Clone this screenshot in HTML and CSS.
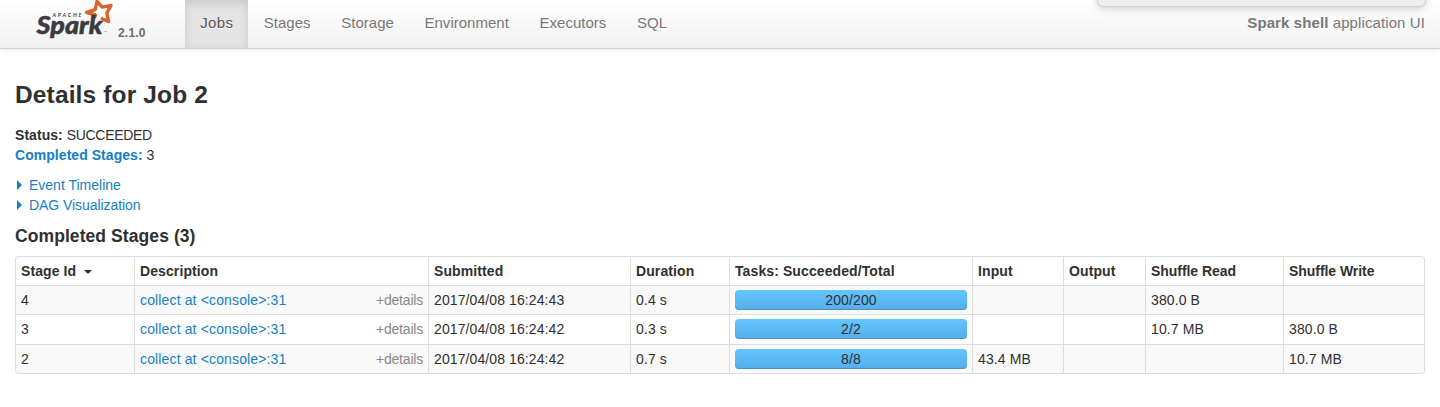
FILE: index.html
```
<!DOCTYPE html>
<html lang="en">
<head>
<meta charset="utf-8">
<title>Spark shell - Details for Job 2</title>
<link rel="stylesheet" href="styles.css">
</head>
<body>
<header class="navbar">
  <a class="brand">
    <svg class="logo" width="80" height="44" viewBox="0 0 80 44">
      <path class="star" d="M58.5 18 L59.5 15 L50.5 12.4 L59.2 9.6 L61 1.5 L66.3 7.2 L75 5.4 L70.8 13 L72.6 21.5 L65 18.2"/>
      <text class="logo-apache" x="16.5" y="17" textLength="29">APACHE</text>
      <text class="logo-spark" x="0.5" y="34.4" textLength="66" lengthAdjust="spacingAndGlyphs">Spark</text>
      <text class="logo-tm" x="68" y="34.4">™</text>
    </svg>
    <span class="version">2.1.0</span>
  </a>
  <nav class="nav">
    <a class="nav-item active">Jobs</a>
    <a class="nav-item">Stages</a>
    <a class="nav-item">Storage</a>
    <a class="nav-item">Environment</a>
    <a class="nav-item">Executors</a>
    <a class="nav-item">SQL</a>
  </nav>
  <p class="app-name"><strong>Spark shell</strong> application UI</p>
  <div class="popup-edge"></div>
</header>
<main class="content">
  <h3 class="title">Details for Job 2</h3>
  <ul class="summary">
    <li><strong>Status:</strong> <span class="status">SUCCEEDED</span></li>
    <li><a class="link"><strong>Completed Stages:</strong></a> 3</li>
  </ul>
  <div class="expand"><span class="arrow"></span><a class="link">Event Timeline</a></div>
  <div class="expand"><span class="arrow"></span><a class="link dag">DAG Visualization</a></div>
  <h4 class="subtitle">Completed Stages (3)</h4>
  <table class="stages">
    <colgroup><col class="c-id"><col class="c-desc"><col class="c-sub"><col class="c-dur"><col class="c-tasks"><col class="c-in"><col class="c-out"><col class="c-read"><col class="c-write"></colgroup>
    <thead>
      <tr><th>Stage Id<span class="caret"></span></th><th>Description</th><th>Submitted</th><th>Duration</th><th>Tasks: Succeeded/Total</th><th>Input</th><th>Output</th><th>Shuffle Read</th><th>Shuffle Write</th></tr>
    </thead>
    <tbody>
      <tr><td>4</td><td><div class="desc"><a class="link">collect at &lt;console&gt;:31</a><span class="details">+details</span></div></td><td>2017/04/08 16:24:43</td><td>0.4 s</td><td><div class="progress">200/200</div></td><td></td><td></td><td>380.0 B</td><td></td></tr>
      <tr class="mid"><td>3</td><td><div class="desc"><a class="link">collect at &lt;console&gt;:31</a><span class="details">+details</span></div></td><td>2017/04/08 16:24:42</td><td>0.3 s</td><td><div class="progress">2/2</div></td><td></td><td></td><td>10.7 MB</td><td>380.0 B</td></tr>
      <tr><td>2</td><td><div class="desc"><a class="link">collect at &lt;console&gt;:31</a><span class="details">+details</span></div></td><td>2017/04/08 16:24:42</td><td>0.7 s</td><td><div class="progress">8/8</div></td><td>43.4 MB</td><td></td><td></td><td>10.7 MB</td></tr>
    </tbody>
  </table>
</main>
</body>
</html>
```
FILE: styles.css
```
* { box-sizing: border-box; }
body { margin: 0; background: #fff; color: #303030; font: 14px/20px "Helvetica Neue", "Liberation Sans", Arial, sans-serif; overflow: hidden; }
.navbar { position: relative; display: flex; height: 49px; padding: 0 15px; background: linear-gradient(#fff, #f1f1f1); border-bottom: 1px solid #d4d4d4; box-shadow: 0 1px 5px rgba(0,0,0,.1); }
.brand { display: flex; width: 170px; padding-left: 21px; }
.logo { flex: none; overflow: visible; }
.star { fill: none; stroke: #d9652c; stroke-width: 3.4; stroke-linejoin: round; }
.logo-spark { font: italic 900 25.5px Lato, sans-serif; fill: #3c3a3e; stroke: #3c3a3e; stroke-width: .5px; }
.logo-apache { font: italic bold 5.4px Lato, sans-serif; fill: #3c3a3e; }
.logo-tm { font: 4px Lato, sans-serif; fill: #777; }
.version { font-size: 12px; font-weight: bold; letter-spacing: .2px; color: #6c6c6c; padding-top: 23px; margin-left: 2px; }
.nav { display: flex; }
.nav-item { padding: 13px 15.3px 0; font-size: 15px; letter-spacing: .02px; color: #777; text-shadow: 0 1px 0 #fff; }
.nav-item.active { letter-spacing: .3px; color: #555; background: #e4e4e4; box-shadow: inset 0 3px 8px rgba(0,0,0,.125); }
.app-name { margin: 13px 0 0 auto; font-size: 15px; letter-spacing: .1px; color: #777; text-shadow: 0 1px 0 #fff; }
.popup-edge { position: absolute; right: 15px; top: -10px; width: 327px; height: 16px; background: #efefef; border-radius: 5px; box-shadow: 0 0 0 1px #d0d0d0, 0 2px 8px rgba(0,0,0,.22); }
.content { padding: 26px 15px 0; }
.title { margin: 0; font-size: 24.5px; line-height: 40px; letter-spacing: .14px; }
.summary { list-style: none; margin: 10px 0; padding: 0; }
.summary strong { letter-spacing: .05px; }
.status { letter-spacing: -.3px; }
.link { color: #1480c4; }
.link.dag { letter-spacing: -.06px; }
.expand { display: flex; align-items: center; height: 20px; }
.arrow { width: 14px; flex: none; }
.arrow::before { content: ""; display: block; width: 0; margin-left: 2px; border-left: 5px solid #1480c4; border-top: 5px solid transparent; border-bottom: 5px solid transparent; }
.subtitle { margin: 11px 0 10px; font-size: 17.5px; line-height: 20px; letter-spacing: .08px; }
.stages { width: 1410px; table-layout: fixed; border-collapse: separate; border-spacing: 0; border: 1px solid #ddd; border-left: 0; border-top: 0; border-radius: 4px; }
.c-id { width: 119px; } .c-desc { width: 294px; } .c-sub { width: 202px; } .c-dur { width: 99px; } .c-tasks { width: 243px; } .c-in { width: 91px; } .c-out { width: 82px; } .c-read { width: 138px; } .c-write { width: 141px; }
.stages th, .stages td { height: 29px; padding: 0 5px; text-align: left; letter-spacing: .1px; border-left: 1px solid #ddd; border-top: 1px solid #ddd; white-space: nowrap; }
.stages th:nth-child(n+8) { letter-spacing: -.05px; }
.stages .mid td { height: 30px; padding-bottom: 1px; }
.stages tbody tr:nth-child(odd) td { background: #f9f9f9; }
.stages th:first-child { border-top-left-radius: 4px; }
.stages th:last-child { border-top-right-radius: 4px; }
.stages tr:last-child td:first-child { border-bottom-left-radius: 4px; }
.stages tr:last-child td:last-child { border-bottom-right-radius: 4px; }
.caret { display: inline-block; margin-left: 8px; vertical-align: 2px; border-top: 4px solid #303030; border-left: 4px solid transparent; border-right: 4px solid transparent; }
.desc { display: flex; justify-content: space-between; letter-spacing: .14px; }
.details { color: #888; letter-spacing: -.2px; }
.progress { height: 20px; text-align: center; border-radius: 4px; background: linear-gradient(#64c5fd, #54adea); box-shadow: inset 0 -1px 0 rgba(0,0,0,.15); }
```
